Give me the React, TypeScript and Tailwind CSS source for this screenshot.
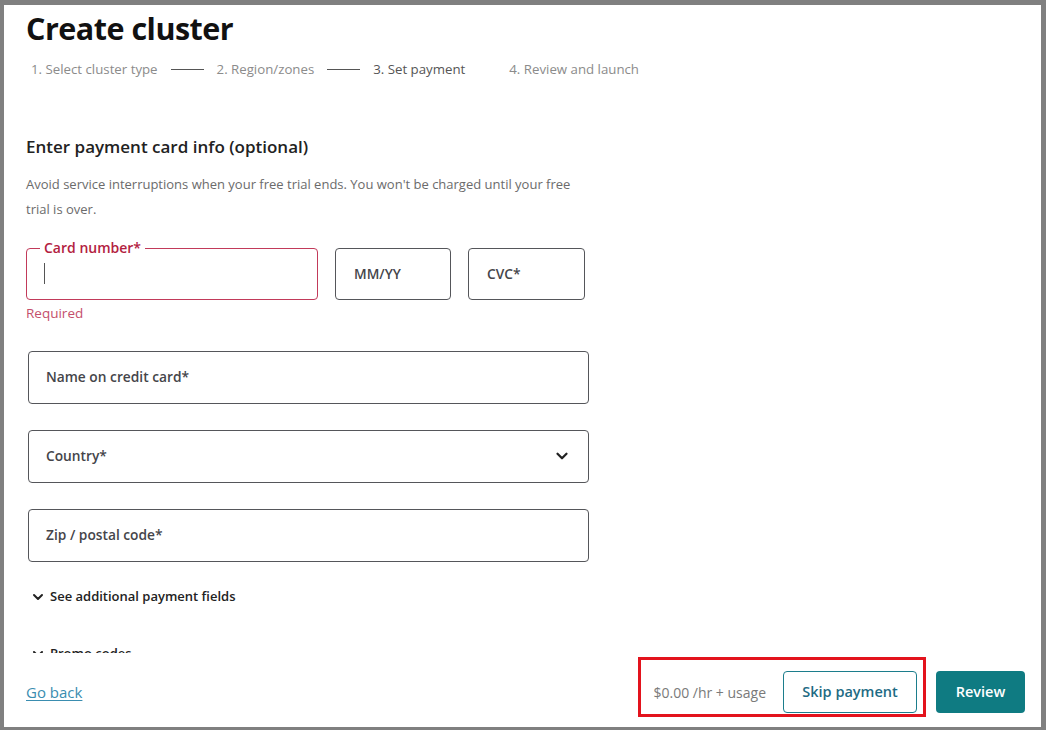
import { ChevronDown } from "lucide-react";

const STEPS = [
  { label: "1. Select cluster type", state: "done" },
  { label: "2. Region/zones", state: "done" },
  { label: "3. Set payment", state: "current" },
  { label: "4. Review and launch", state: "todo" },
];

function Field({ label, chevron }: { label: string; chevron?: boolean }) {
  return (
    <div className="flex h-[53px] w-[561px] items-center justify-between rounded-[4px] border border-[#55565a] pl-[17px] pr-[17px]">
      <span className="text-[13.75px] font-semibold text-[#45454a]">{label}</span>
      {chevron && <ChevronDown className="h-[18px] w-[18px] text-[#222]" strokeWidth={3} />}
    </div>
  );
}

export default function App() {
  return (
    <div
      className="flex h-[730px] w-[1046px] bg-[#808080] pb-[3px] pl-[4px] pr-[5px] pt-[5px] text-[#222]"
      style={{ fontFamily: '"Open Sans", "Noto Sans", sans-serif' }}
    >
      <div className="flex flex-1 flex-col bg-white">
        <main className="h-[648px] overflow-hidden pl-[22px]">
          <h1 className="mt-[2px] text-[30.5px] font-bold leading-[42px] tracking-[-0.5px] text-[#111]">
            Create cluster
          </h1>
          <ol className="ml-[5px] mt-[11px] flex items-center text-[13.25px] text-[#8b8b8b]">
            {STEPS.map((step, i) => (
              <li key={step.label} className="flex items-center">
                <span className={step.state === "current" ? "text-[#555]" : ""}>{step.label}</span>
                {i < 2 && <span className="mx-[13px] h-px w-[33px] bg-[#555]" />}
                {i === 2 && <span className="w-[44px]" />}
              </li>
            ))}
          </ol>

          <h2 className="mt-[55px] text-[17px] font-semibold leading-[24px] text-[#222]">
            Enter payment card info (optional)
          </h2>
          <p className="mt-[13px] w-[570px] text-[13px] leading-[25px] text-[#6b6b6b]">
            Avoid service interruptions when your free trial ends. You won't be charged until your free trial is over.
          </p>

          <div className="mt-[26px] flex gap-[17px]">
            <div className="relative flex h-[52px] w-[292px] items-center rounded-[4px] border border-[#c23a5a] pl-[17px]">
              <span className="absolute -top-[11px] left-[13px] bg-white px-[4px] text-[14px] font-semibold leading-[20px] text-[#b3213f]">
                Card number*
              </span>
              <span className="h-[21px] w-px bg-[#555]" />
            </div>
            <div className="flex h-[52px] w-[116px] items-center rounded-[4px] border border-[#55565a] pl-[18px] text-[13.75px] font-semibold text-[#45454a]">
              MM/YY
            </div>
            <div className="flex h-[52px] w-[117px] items-center rounded-[4px] border border-[#55565a] pl-[18px] text-[13.75px] font-semibold text-[#45454a]">
              CVC*
            </div>
          </div>
          <p className="mt-[3px] text-[13.5px] leading-[20px] text-[#c4506c]">Required</p>

          <div className="ml-[2px] mt-[28px] flex flex-col gap-[26px]">
            <Field label="Name on credit card*" />
            <Field label="Country*" chevron />
            <Field label="Zip / postal code*" />
          </div>

          <div className="ml-[4px] mt-[25px] flex items-center gap-[4px] text-[13px] font-semibold text-[#222]">
            <ChevronDown className="h-[16px] w-[16px]" strokeWidth={3} />
            See additional payment fields
          </div>
          <div className="ml-[4px] mt-[38px] flex items-center gap-[4px] text-[13px] font-semibold text-[#222]">
            <ChevronDown className="h-[16px] w-[16px]" strokeWidth={3} />
            Promo codes
          </div>
        </main>

        <footer className="flex flex-1 items-start justify-between pl-[22px] pr-[16px] pt-[4px]">
          <a href="#" className="mt-[24px] text-[15px] leading-[22px] text-[#3a8db0] underline underline-offset-2">
            Go back
          </a>
          <div className="flex items-start gap-[10px]">
            <div className="flex items-center gap-[17px] border-[3px] border-[#e3131d] pb-[1px] pl-[12px] pr-[6px] pt-[11px]">
              <span className="text-[14px] text-[#7a7a7a]">$0.00 /hr + usage</span>
              <button className="h-[42px] w-[134px] rounded-[4px] border border-[#1c7d8c] text-[14.5px] font-semibold text-[#1e6b84]">
                Skip payment
              </button>
            </div>
            <button className="mt-[14px] h-[42px] w-[89px] rounded-[4px] bg-[#0f7b82] text-[14.5px] font-semibold text-white">
              Review
            </button>
          </div>
        </footer>
      </div>
    </div>
  );
}
